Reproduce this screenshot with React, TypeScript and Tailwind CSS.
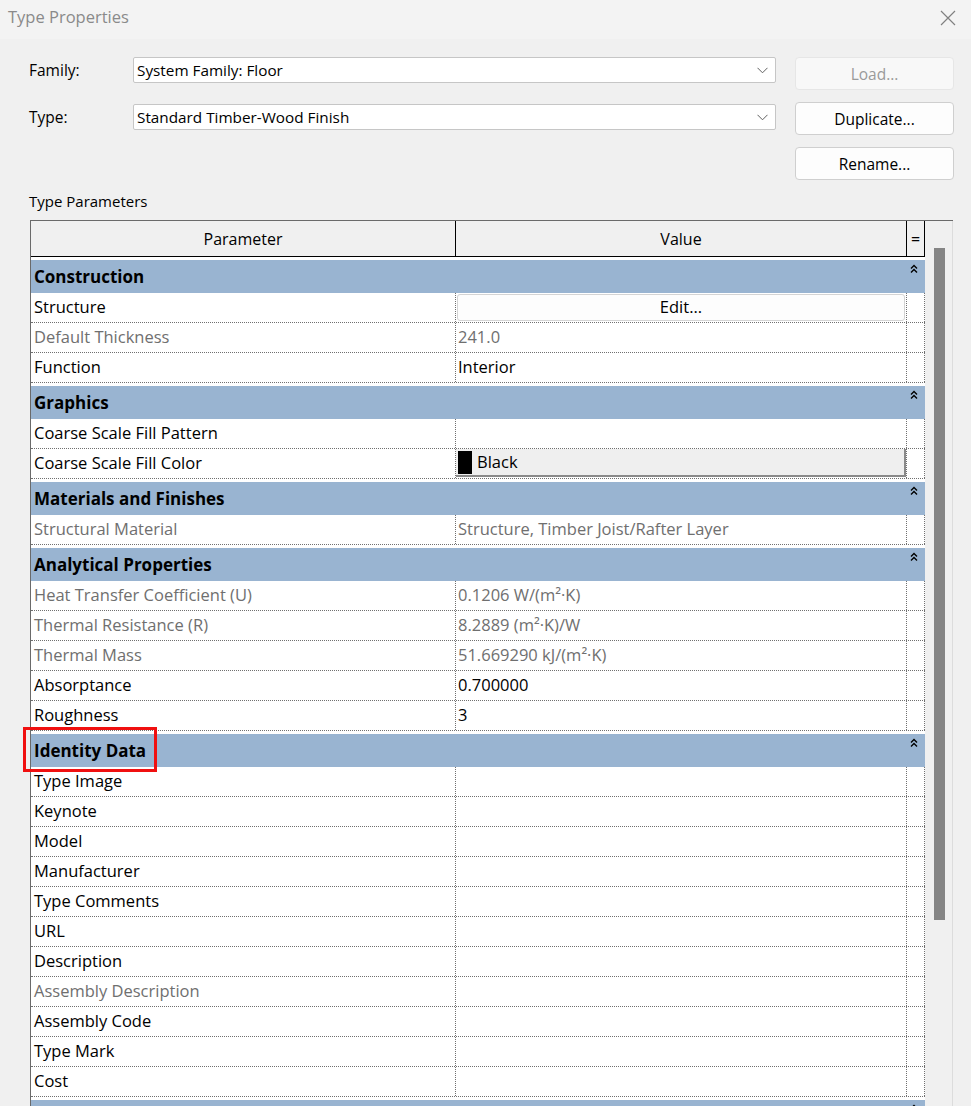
import React from "react";

type Val =
  | string
  | { kind: "button"; label: string }
  | { kind: "color"; label: string };

type Row = { p: string; v: Val; gray?: boolean };
type Group = { name: string; rows: Row[] };

const groups: Group[] = [
  {
    name: "Construction",
    rows: [
      { p: "Structure", v: { kind: "button", label: "Edit..." } },
      { p: "Default Thickness", v: "241.0", gray: true },
      { p: "Function", v: "Interior" },
    ],
  },
  {
    name: "Graphics",
    rows: [
      { p: "Coarse Scale Fill Pattern", v: "" },
      { p: "Coarse Scale Fill Color", v: { kind: "color", label: "Black" } },
    ],
  },
  {
    name: "Materials and Finishes",
    rows: [{ p: "Structural Material", v: "Structure, Timber Joist/Rafter Layer", gray: true }],
  },
  {
    name: "Analytical Properties",
    rows: [
      { p: "Heat Transfer Coefficient (U)", v: "0.1206 W/(m²·K)", gray: true },
      { p: "Thermal Resistance (R)", v: "8.2889 (m²·K)/W", gray: true },
      { p: "Thermal Mass", v: "51.669290 kJ/(m²·K)", gray: true },
      { p: "Absorptance", v: "0.700000" },
      { p: "Roughness", v: "3" },
    ],
  },
  {
    name: "Identity Data",
    rows: [
      { p: "Type Image", v: "" },
      { p: "Keynote", v: "" },
      { p: "Model", v: "" },
      { p: "Manufacturer", v: "" },
      { p: "Type Comments", v: "" },
      { p: "URL", v: "" },
      { p: "Description", v: "" },
      { p: "Assembly Description", v: "", gray: true },
      { p: "Assembly Code", v: "" },
      { p: "Type Mark", v: "" },
      { p: "Cost", v: "" },
    ],
  },
  { name: "", rows: [] },
];

function Collapse() {
  return (
    <svg width="8" height="10" viewBox="0 0 8 10" className="block">
      <path d="M1 4.5 L4 1.5 L7 4.5" fill="none" stroke="#000" strokeWidth="1.4" />
      <path d="M1 8.5 L4 5.5 L7 8.5" fill="none" stroke="#000" strokeWidth="1.4" />
    </svg>
  );
}

function Chevron() {
  return (
    <svg width="11" height="7" viewBox="0 0 11 7" className="block">
      <path d="M0.5 0.8 L5.5 5.8 L10.5 0.8" fill="none" stroke="#606060" strokeWidth="1" />
    </svg>
  );
}

function GroupHeader({ name }: { name: string }) {
  return (
    <div className="bg-white pt-[3px]">
      <div className="flex h-[33px] items-center justify-between bg-[#99b4d1] pl-[3px] pr-[7px]">
        <span className="text-[17px] font-bold text-black">{name}</span>
        <div className="self-start pt-[4px]">
          <Collapse />
        </div>
      </div>
    </div>
  );
}

function ValueCell({ v, gray }: { v: Val; gray?: boolean }) {
  if (typeof v === "string") {
    return (
      <div
        className={`flex w-[451px] items-center border-r border-dotted border-[#707070] pb-[2px] pl-[2px] ${
          gray ? "text-[#6f6f6f]" : "text-black"
        }`}
      >
        {v}
      </div>
    );
  }
  if (v.kind === "button") {
    return (
      <div className="flex w-[451px] border-r border-dotted border-[#707070] p-[1px]">
        <div className="flex flex-1 items-center justify-center rounded-[3px] border border-[#d4d4d4] bg-[#fdfdfd] pb-[2px] text-black">
          {v.label}
        </div>
      </div>
    );
  }
  return (
    <div className="flex w-[451px] border-r border-dotted border-[#707070] pb-[1px]">
      <div className="flex flex-1 items-center gap-[5px] border-b-2 border-r-2 border-[#8a8a8a] bg-[#efefef] pl-[2px]">
        <div className="h-[23px] w-[14px] bg-black" />
        <span className="text-black">{v.label}</span>
      </div>
    </div>
  );
}

function DataRow({ r }: { r: Row }) {
  return (
    <div className="flex h-[30px] border-b border-dotted border-[#707070] bg-white">
      <div
        className={`flex w-[425px] items-center border-r border-dotted border-[#707070] pb-[2px] pl-[3px] ${
          r.gray ? "text-[#6f6f6f]" : "text-black"
        }`}
      >
        {r.p}
      </div>
      <ValueCell v={r.v} gray={r.gray} />
      <div className="w-[18px] border-r border-dotted border-[#707070]" />
    </div>
  );
}

export default function App() {
  return (
    <div
      className="relative h-[1106px] w-[971px] overflow-hidden bg-[#f0f0f0] text-[15px] leading-[20px] text-black"
      style={{ fontFamily: '"Open Sans", "Noto Sans", sans-serif' }}
    >
      {/* Title bar */}
      <div className="flex h-[39px] items-center justify-between bg-[#f3f3f3] pl-[8px] pr-[15px]">
        <span className="pb-[5px] text-[16.5px] text-[#8a8a8a]">Type Properties</span>
        <svg width="16" height="16" viewBox="0 0 16 16" className="mb-[3px] block">
          <path d="M1 1 L15 15 M15 1 L1 15" stroke="#808080" strokeWidth="1.2" />
        </svg>
      </div>

      {/* Form */}
      <div className="flex pl-[29px] pt-[18px]">
        <div className="flex flex-col gap-[21px]">
          <div className="flex items-center">
            <span className="w-[104px] pb-[1px] text-[15.5px]">Family:</span>
            <div className="flex h-[26px] w-[643px] items-center justify-between rounded-[2px] border border-[#c6c6c6] bg-white pl-[3px] pr-[7px]">
              <span className="pb-[1px] text-[15.3px]">System Family: Floor</span>
              <Chevron />
            </div>
          </div>
          <div className="flex items-center">
            <span className="w-[104px] pb-[1px] text-[15.5px]">Type:</span>
            <div className="flex h-[26px] w-[643px] items-center justify-between rounded-[2px] border border-[#c6c6c6] bg-white pl-[3px] pr-[7px]">
              <span className="pb-[1px] text-[15.3px]">Standard Timber-Wood Finish</span>
              <Chevron />
            </div>
          </div>
        </div>
        <div className="ml-[19px] flex w-[159px] flex-col gap-[12px] text-[15.5px]">
          <div className="flex h-[33px] items-center justify-center rounded-[4px] border border-[#e6e6e6] bg-[#f8f8f8] text-[#9a9a9a]">
            Load...
          </div>
          <div className="flex h-[33px] items-center justify-center rounded-[4px] border border-[#cfcfcf] bg-[#fdfdfd]">
            Duplicate...
          </div>
          <div className="flex h-[33px] items-center justify-center rounded-[4px] border border-[#cfcfcf] bg-[#fdfdfd]">
            Rename...
          </div>
        </div>
      </div>

      <div className="ml-[29px] mt-[11px]">Type Parameters</div>

      {/* Table */}
      <div className="ml-[30px] mt-[9px] flex w-[923px] border-l border-t border-[#6a6a6a] text-[16.5px]">
        <div className="flex w-[894px] flex-col">
          <div className="flex h-[36px] border-b border-black bg-[#f0f0f0] text-[16px]">
            <div className="flex w-[425px] items-center justify-center border-r border-black">Parameter</div>
            <div className="flex w-[451px] items-center justify-center border-r border-black">Value</div>
            <div className="flex w-[18px] items-center justify-center border-r border-black">=</div>
          </div>
          {groups.map((g, i) => (
            <div key={i}>
              <GroupHeader name={g.name} />
              {g.rows.map((r) => (
                <DataRow key={r.p} r={r} />
              ))}
            </div>
          ))}
        </div>
        <div className="w-[29px] border-r border-[#dcdcdc] bg-[#f0f0f0]">
          <div className="ml-[9px] mt-[27px] h-[672px] w-[11px] bg-[#858585]" />
        </div>
      </div>

      {/* Highlight box */}
      <div className="absolute left-[23px] top-[727px] h-[45px] w-[134px] border-[3px] border-[#f01010]" />
    </div>
  );
}
